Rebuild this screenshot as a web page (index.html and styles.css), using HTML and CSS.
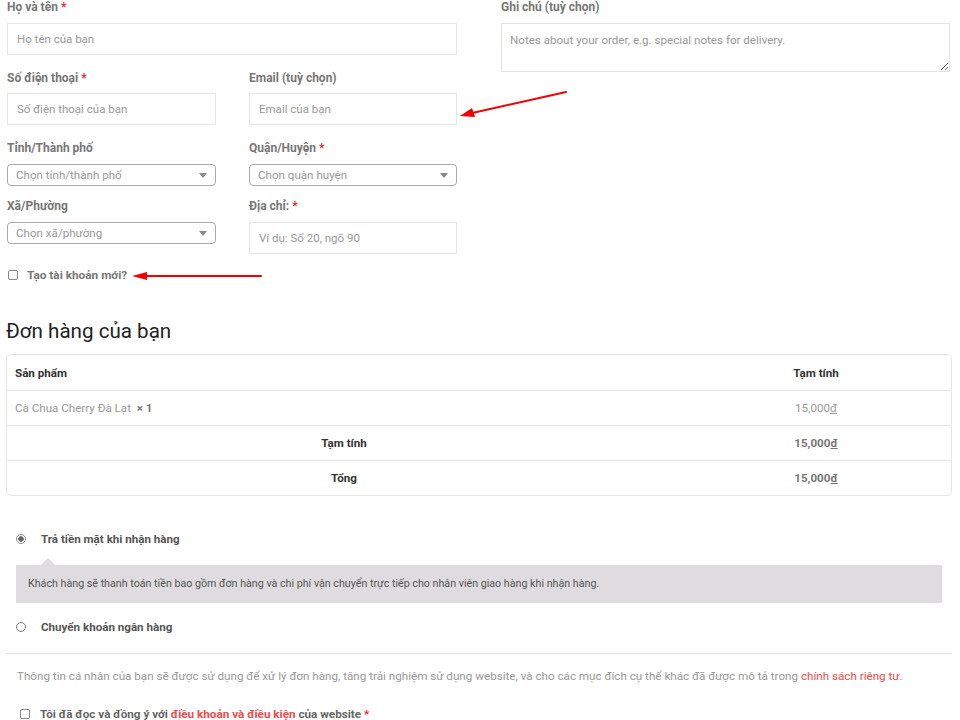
FILE: index.html
```html
<!DOCTYPE html>
<html lang="vi">
<head>
<meta charset="utf-8">
<title>Thanh toán</title>
<link rel="stylesheet" href="styles.css">
</head>
<body>
<div class="page">
  <div class="billing">
    <div class="form-left">
      <div class="field full">
        <label class="lbl">Họ và tên <span class="req">*</span></label>
        <input class="input" type="text" placeholder="Họ tên của bạn">
      </div>
      <div class="field tight">
        <label class="lbl">Số điện thoại <span class="req">*</span></label>
        <input class="input" type="text" placeholder="Số điện thoại của bạn">
      </div>
      <div class="field tight">
        <label class="lbl">Email (tuỳ chọn)</label>
        <input class="input" type="text" placeholder="Email của bạn">
      </div>
      <div class="field sel">
        <label class="lbl">Tỉnh/Thành phố</label>
        <div class="select"><span>Chọn tỉnh/thành phố</span><i class="caret"></i></div>
      </div>
      <div class="field sel">
        <label class="lbl">Quận/Huyện <span class="req">*</span></label>
        <div class="select"><span>Chọn quận huyện</span><i class="caret"></i></div>
      </div>
      <div class="field last">
        <label class="lbl">Xã/Phường</label>
        <div class="select"><span>Chọn xã/phường</span><i class="caret"></i></div>
      </div>
      <div class="field last">
        <label class="lbl">Địa chỉ: <span class="req">*</span></label>
        <input class="input" type="text" placeholder="Ví dụ: Số 20, ngõ 90">
      </div>
    </div>
    <div class="form-right">
      <label class="lbl">Ghi chú (tuỳ chọn)</label>
      <textarea class="notes" placeholder="Notes about your order, e.g. special notes for delivery."></textarea>
    </div>
  </div>

  <label class="create-account"><input type="checkbox" class="check"><span>Tạo tài khoản mới?</span></label>

  <h3 class="order-title">Đơn hàng của bạn</h3>

  <table class="order">
    <thead>
      <tr><th class="c1">Sản phẩm</th><th class="c2">Tạm tính</th></tr>
    </thead>
    <tbody>
      <tr><td class="c1 product">Cà Chua Cherry Đà Lạt&nbsp; <strong>× 1</strong></td><td class="c2 price">15,000<u>đ</u></td></tr>
    </tbody>
    <tfoot>
      <tr><th class="center">Tạm tính</th><td class="c2 total">15,000<u>đ</u></td></tr>
      <tr><th class="center">Tổng</th><td class="c2 total">15,000<u>đ</u></td></tr>
    </tfoot>
  </table>

  <div class="payment">
    <label class="method"><input type="radio" name="pm" class="radio" checked><span>Trả tiền mặt khi nhận hàng</span></label>
    <div class="method-box">Khách hàng sẽ thanh toán tiền bao gồm đơn hàng và chi phí vận chuyển trực tiếp cho nhân viên giao hàng khi nhận hàng.</div>
    <label class="method second"><input type="radio" name="pm" class="radio"><span>Chuyển khoản ngân hàng</span></label>
  </div>

  <div class="place-order">
    <p class="privacy">Thông tin cá nhân của bạn sẽ được sử dụng để xử lý đơn hàng, tăng trải nghiệm sử dụng website, và cho các mục đích cụ thể khác đã được mô tả trong <a href="#">chính sách riêng tư</a>.</p>
    <label class="terms"><input type="checkbox" class="check"><span>Tôi đã đọc và đồng ý với <a href="#">điều khoản và điều kiện</a> của website <span class="req">*</span></span></label>
  </div>
</div>

<svg class="annotations" width="960" height="720" viewBox="0 0 960 720">
  <line x1="566" y1="92" x2="470" y2="113.5" stroke="#f20000" stroke-width="2" stroke-linecap="round"/>
  <polygon points="460,116 472,108 475,117" fill="#f20000"/>
  <line x1="261" y1="276" x2="143" y2="276" stroke="#f20000" stroke-width="2" stroke-linecap="round"/>
  <polygon points="132,276 147,272 147,280" fill="#f20000"/>
</svg>
</body>
</html>
```

FILE: styles.css
```css
* { box-sizing: border-box; }

html, body {
  margin: 0;
  padding: 0;
  background: #fff;
}

body {
  font-family: Roboto, "Noto Sans", "Liberation Sans", sans-serif;
  font-size: 11.6px;
  color: #777;
  width: 960px;
  height: 720px;
  overflow: hidden;
  position: relative;
}

.page {
  padding-left: 6px;
  width: 952px;
}

.billing {
  display: flex;
  gap: 44px;
  padding-left: 1px;
}

.form-left {
  width: 450px;
  display: grid;
  grid-template-columns: 209px 208px;
  column-gap: 33px;
}

.field { margin-bottom: 15px; }
.field.full { grid-column: 1 / 3; margin-bottom: 16px; }
.field.tight { margin-bottom: 16px; }
.field.tight .lbl { margin-bottom: 8px; }
.field.sel { margin-bottom: 13px; }
.field.last { margin-bottom: 0; }

.lbl {
  display: block;
  font-weight: 700;
  font-size: 12px;
  line-height: 14px;
  color: #777;
  margin-bottom: 9px;
}

.req { color: #e8272b; }

.input {
  display: block;
  width: 100%;
  height: 32px;
  border: 1px solid #e6e6e6;
  border-radius: 0;
  padding: 0 9px;
  font-family: inherit;
  font-size: 11.5px;
  color: #555;
  background: #fff;
  outline: none;
}
.input::placeholder { color: #999; }

.select {
  height: 22px;
  border: 1px solid #aaa;
  border-radius: 4px;
  display: flex;
  align-items: center;
  justify-content: space-between;
  padding: 0 8px 0 8px;
  color: #999;
  font-size: 11.6px;
}

.caret {
  width: 0;
  height: 0;
  border-left: 4px solid transparent;
  border-right: 4px solid transparent;
  border-top: 5px solid #888;
}

.form-right { width: 449px; }

.notes {
  display: block;
  width: 449px;
  height: 49px;
  border: 1px solid #e3e3e3;
  padding: 9px 8px;
  font-family: inherit;
  font-size: 11.6px;
  line-height: 14px;
  color: #555;
  resize: vertical;
  outline: none;
}
.notes::placeholder { color: #999; }

.check {
  -webkit-appearance: none;
  appearance: none;
  width: 10px;
  height: 10px;
  margin: 0;
  border: 1px solid #888;
  border-radius: 2px;
  background: #fff;
  flex: none;
}

.create-account {
  display: flex;
  align-items: center;
  gap: 9px;
  margin-top: 14px;
  padding-left: 2px;
  line-height: 14px;
  font-size: 11.8px;
  font-weight: 700;
  color: #777;
}

.order-title {
  margin: 36px 0 10px;
  font-size: 20.6px;
  line-height: 26px;
  font-weight: 400;
  color: #222;
}

.order {
  width: 946px;
  border: 1px solid #e6e6e6;
  border-radius: 5px;
  border-spacing: 0;
  border-collapse: separate;
}

.order th, .order td {
  height: 35px;
  padding: 0;
  font-size: 11.6px;
  text-align: left;
}

.order tbody td, .order tfoot th, .order tfoot td {
  border-top: 1px solid #e6e6e6;
}

.order .c1 { width: 674px; padding-left: 8px; }
.order th { font-weight: 700; color: #333; }
.order th.c2, .order td.c2 { text-align: center; }
.order th.center { text-align: center; }

.product { color: #999; }
.product strong { color: #777; font-weight: 700; }
.price { color: #999; }
.total { font-weight: 700; color: #777; }
.order u { text-decoration: underline; }

.payment {
  margin-top: 35px;
  padding-left: 10px;
}

.method {
  display: flex;
  align-items: center;
  gap: 15px;
  line-height: 16px;
  font-weight: 700;
  color: #555;
}

.radio {
  -webkit-appearance: none;
  appearance: none;
  width: 10px;
  height: 10px;
  margin: 0;
  border: 1px solid #777;
  border-radius: 50%;
  background: #fff;
  flex: none;
}
.radio:checked {
  background: radial-gradient(circle, #666 0 2.5px, #fff 3px);
  border-color: #888;
}

.method-box {
  position: relative;
  width: 926px;
  margin-top: 18px;
  background: #dedcde;
  padding: 11px 12px;
  line-height: 16px;
  font-size: 10.7px;
  color: #555;
}
.method-box::before {
  content: "";
  position: absolute;
  left: 25px;
  top: -7px;
  border-left: 7px solid transparent;
  border-right: 7px solid transparent;
  border-bottom: 7px solid #dedcde;
}

.method.second { margin-top: 16px; }

.place-order {
  margin-top: 18px;
  border-top: 1px solid #e0e0e0;
  width: 946px;
}

.privacy {
  margin: 14px 0 0;
  padding-left: 11px;
  line-height: 16px;
  font-size: 11.65px;
  color: #999;
}

.privacy a, .terms a {
  color: #f14a4a;
  text-decoration: none;
}

.terms {
  display: flex;
  align-items: center;
  gap: 10px;
  margin-top: 22px;
  padding-left: 14px;
  line-height: 16px;
  font-size: 11.7px;
  font-weight: 700;
  color: #666;
}

.annotations {
  position: absolute;
  left: 0;
  top: 0;
  pointer-events: none;
}
```
